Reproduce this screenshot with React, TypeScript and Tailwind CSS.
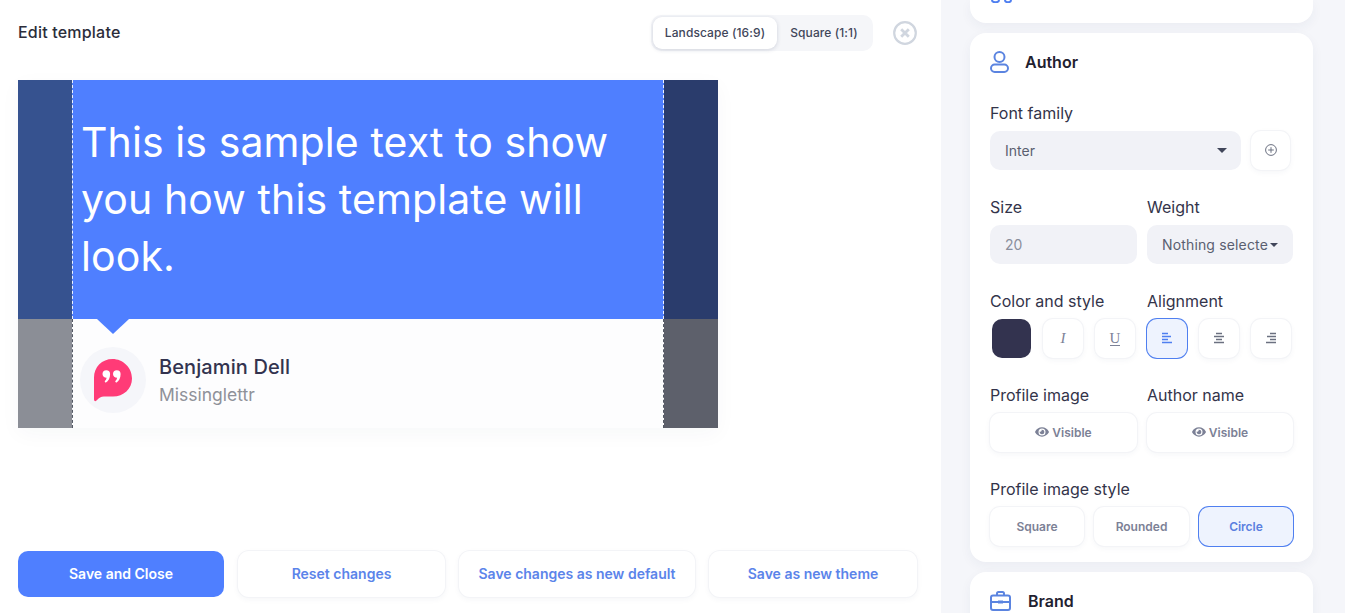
import type { ReactNode } from 'react'
import { FaEye } from 'react-icons/fa'

const shadowBtn = 'bg-white ring-1 ring-[#f3f4f7] shadow-[0_2px_6px_rgba(40,50,90,0.05)]'

function Field({ label, children }: { label: string; children: ReactNode }) {
  return (
    <div>
      <div className="h-[22px] mb-[7px] text-[16px] leading-[22px] text-[#33344a] whitespace-nowrap">{label}</div>
      {children}
    </div>
  )
}

function IconBox({ active, children }: { active?: boolean; children: ReactNode }) {
  return (
    <div
      className={`w-[40px] h-[39px] rounded-[10px] flex items-center justify-center ${
        active ? 'bg-[#eef3fe] ring-1 ring-[#4f7ff0]' : shadowBtn
      }`}
    >
      {children}
    </div>
  )
}

function AlignIcon({ offsets, color }: { offsets: number[][]; color: string }) {
  return (
    <svg width="12" height="12" viewBox="0 0 12 12" stroke={color} strokeWidth="1.500" className="-mt-[1px]">
      {offsets.map(([a, b], i) => (
        <line key={i} x1={a} x2={b} y1={1.5 + i * 3} y2={1.5 + i * 3} />
      ))}
    </svg>
  )
}

function VisibleButton() {
  return (
    <div className={`h-[39px] rounded-[10px] flex items-center justify-center gap-[3px] text-[12px] font-semibold text-[#7c8196] ${shadowBtn}`}>
      <FaEye size={14} className="text-[#7c8196] -mt-[2px]" />
      Visible
    </div>
  )
}

function ActionButton({ width, children }: { width: string; children: ReactNode }) {
  return (
    <button className={`${width} h-[46px] pb-[1px] rounded-[11px] text-[14px] font-semibold text-[#5b84ea] ${shadowBtn}`}>
      {children}
    </button>
  )
}

function Preview() {
  return (
    <div className="w-[700px] h-[348px] grid grid-cols-[54px_592px_54px] grid-rows-[239px_109px] shadow-[0_6px_20px_rgba(40,50,90,0.035)]">
      <div className="bg-[#36528f]" />
      <div className="bg-[#4f7fff] border-x border-dashed border-x-white/90 pl-[8px] pt-[34px] text-[41px] leading-[57px] tracking-[0.1px] text-white">
        This is sample text to show you how this template will look.
      </div>
      <div className="bg-[#2a3c6c]" />
      <div className="bg-[#8b8e96]" />
      <div className="relative bg-[#fdfdfe] border-x border-dashed border-x-[#555a66] pl-[7px] pt-[28px] flex items-start gap-[13px]">
        <div className="absolute left-[24px] top-0 w-0 h-0 border-l-[16px] border-r-[16px] border-t-[15px] border-l-transparent border-r-transparent border-t-[#4f7fff]" />
        <div className="w-[66px] h-[66px] rounded-full bg-[#f5f6fa] flex items-center justify-center">
          <svg width="40" height="44" viewBox="0 0 40 44">
            <path d="M19.500 1C30 1 39 9.500 39 20.500C39 31 30.500 38.500 20 38.500H11C8 38.500 6 40 3.500 42.500C2 44 1 43 1 41V19.500C1 9 9 1 19.500 1Z" fill="#ff3b77" />
            <path d="M9.500 16a3.800 3.800 0 0 1 7.600 0c0 4-1.500 7-4.500 8.700l-1-1.400c1.100-1 1.800-2.100 2-3.500c-2.300-.1-4.100-1.600-4.100-3.800Z" fill="#fff" />
            <path d="M20 16a3.800 3.800 0 0 1 7.600 0c0 4-1.500 7-4.500 8.700l-1-1.400c1.100-1 1.800-2.100 2-3.500c-2.300-.1-4.100-1.600-4.100-3.800Z" fill="#fff" />
          </svg>
        </div>
        <div className="mt-[6px]">
          <div className="text-[20px] leading-[28px] tracking-[0.1px] font-medium text-[#33334f]">Benjamin Dell</div>
          <div className="text-[17.500px] leading-[27px] text-[#8f9199]">Missinglettr</div>
        </div>
      </div>
      <div className="bg-[#5d606b]" />
    </div>
  )
}

export default function App() {
  return (
    <div className="w-[1345px] h-[613px] overflow-hidden flex bg-[#f5f6fa]" style={{ fontFamily: 'Inter, sans-serif' }}>
      <main className="w-[941px] h-full shrink-0 bg-white px-[18px] flex flex-col">
        <header className="h-[80px] flex items-start justify-between">
          <h1 className="mt-[21px] text-[16px] leading-[22px] tracking-[0.2px] font-medium text-[#2b2d3a]">Edit template</h1>
          <div className="flex items-center gap-[20px] mt-[15px] mr-[6px]">
            <div className="w-[222px] h-[36px] rounded-[10px] bg-[#f5f6f9] p-[2px] flex text-[12px] tracking-[0.1px] font-medium text-[#41465a]">
              <div className="w-[124px] rounded-[9px] bg-white shadow-[0_1px_4px_rgba(40,50,90,0.18)] flex items-center justify-center">Landscape (16:9)</div>
              <div className="flex-1 flex items-center justify-center">Square (1:1)</div>
            </div>
            <svg width="24" height="24" viewBox="0 0 24 24" fill="none" stroke="#d0d6df" strokeWidth="2.200">
              <circle cx="12" cy="12" r="10.800" />
              <path d="M8.200 8.200L15.800 15.800M15.800 8.200L8.200 15.800" strokeWidth="2.800" />
            </svg>
          </div>
        </header>
        <Preview />
        <footer className="mt-[123px] flex gap-[14px]">
          <button className="w-[206px] h-[46px] pb-[1px] rounded-[10px] bg-[#4f7fff] text-[14px] font-semibold text-white">Save and Close</button>
          <ActionButton width="w-[207px]">Reset changes</ActionButton>
          <ActionButton width="w-[236px]">Save changes as new default</ActionButton>
          <ActionButton width="w-[208px]">Save as new theme</ActionButton>
        </footer>
      </main>

      <aside className="flex-1 pl-[29px] flex flex-col gap-[10px] bg-[#f5f6fa]">
        <div className="w-[343px] h-[23px] shrink-0 rounded-b-[16px] bg-white shadow-[0_4px_12px_rgba(40,50,90,0.05)] pl-[21px]">
          <svg width="22" height="3" viewBox="0 0 22 3" fill="none" stroke="#4f7ff0" strokeWidth="2" className="block">
            <path d="M1 0c0 3 7 3 7 0M14 0c0 3 6 3 6 0" />
          </svg>
        </div>

        <section className="w-[343px] shrink-0 rounded-[16px] bg-white px-[20px] pt-[18px] pb-[16px] shadow-[0_4px_12px_rgba(40,50,90,0.05)]">
          <div className="h-[22px] flex items-center gap-[16px] mb-[29px]">
            <svg width="19" height="22" viewBox="0 0 19 22" fill="none" stroke="#5b84e0" strokeWidth="2">
              <circle cx="9.500" cy="6" r="5" />
              <rect x="1" y="13.500" width="17" height="7.500" rx="3.700" />
            </svg>
            <h2 className="text-[16px] font-semibold text-[#1f2130]">Author</h2>
          </div>

          <div className="flex flex-col gap-[26px]">
            <Field label="Font family">
              <div className="flex gap-[10px]">
                <div className="w-[251px] h-[39px] rounded-[10px] bg-[#f1f2f7] pl-[15px] pr-[14px] flex items-center justify-between text-[14px] text-[#5a5f70]">
                  Inter
                  <span className="w-0 h-0 border-l-[5px] border-r-[5px] border-t-[5px] border-l-transparent border-r-transparent border-t-[#41465a]" />
                </div>
                <div className={`w-[39px] h-[39px] rounded-[10px] flex items-center justify-center ${shadowBtn}`}>
                  <svg width="12" height="12" viewBox="0 0 12 12" fill="none" stroke="#6b7080" strokeWidth="1" className="-mt-[1px]">
                    <circle cx="6" cy="6" r="5.400" />
                    <path d="M3.200 6H8.800M6 3.200V8.800" />
                  </svg>
                </div>
              </div>
            </Field>

            <div className="grid grid-cols-[147px_146px] gap-x-[10px]">
              <Field label="Size">
                <div className="h-[39px] rounded-[10px] bg-[#f1f2f7] pl-[15px] flex items-center text-[14px] text-[#8a8e9c]">20</div>
              </Field>
              <Field label="Weight">
                <div className="h-[39px] rounded-[10px] bg-[#f1f2f7] pl-[15px] pr-[15px] flex items-center justify-between text-[14px] tracking-[0.15px] text-[#5a5f70] overflow-hidden">
                  <span className="w-[106px] overflow-hidden whitespace-nowrap">Nothing selected</span>
                  <span className="w-0 h-0 border-l-[4px] border-r-[4px] border-t-[4px] border-l-transparent border-r-transparent border-t-[#41465a]" />
                </div>
              </Field>
            </div>

            <div className="grid grid-cols-[147px_146px] gap-x-[10px]">
              <Field label="Color and style">
                <div className="flex items-center gap-[12px]">
                  <div className="w-[39px] h-[39px] ml-[2px] rounded-[10px] bg-[#33334f]" />
                  <IconBox>
                    <span className="text-[15px] italic text-[#7c8196]" style={{ fontFamily: '"Liberation Serif", serif' }}>I</span>
                  </IconBox>
                  <IconBox>
                    <span className="text-[15px] leading-[14px] border-b border-[#7c8196] text-[#7c8196]" style={{ fontFamily: '"Liberation Serif", serif' }}>U</span>
                  </IconBox>
                </div>
              </Field>
              <Field label="Alignment">
                <div className="flex gap-[12px]">
                  <IconBox active>
                    <AlignIcon color="#4f7ff0" offsets={[[1, 7], [1, 10], [1, 7], [1, 11]]} />
                  </IconBox>
                  <IconBox>
                    <AlignIcon color="#6b7080" offsets={[[3, 9], [1, 11], [3, 9], [1, 11]]} />
                  </IconBox>
                  <IconBox>
                    <AlignIcon color="#6b7080" offsets={[[5, 11], [2, 11], [5, 11], [1, 11]]} />
                  </IconBox>
                </div>
              </Field>
            </div>

            <div className="grid grid-cols-[147px_146px] gap-x-[10px]">
              <Field label="Profile image">
                <VisibleButton />
              </Field>
              <Field label="Author name">
                <VisibleButton />
              </Field>
            </div>

            <Field label="Profile image style">
              <div className="grid grid-cols-[94px_95px_94px] gap-x-[10px] text-[12px] font-semibold">
                <div className={`h-[39px] rounded-[10px] flex items-center justify-center text-[#7c8196] ${shadowBtn}`}>Square</div>
                <div className={`h-[39px] rounded-[10px] flex items-center justify-center text-[#7c8196] ${shadowBtn}`}>Rounded</div>
                <div className="h-[39px] rounded-[10px] flex items-center justify-center text-[#5b7fe0] bg-[#eef3fe] ring-1 ring-[#4f7ff0]">Circle</div>
              </div>
            </Field>
          </div>
        </section>

        <section className="w-[343px] h-[80px] shrink-0 rounded-[16px] bg-white px-[20px] pt-[17px] shadow-[0_4px_12px_rgba(40,50,90,0.05)]">
          <div className="flex items-center gap-[17px]">
            <svg width="21" height="20" viewBox="0 0 21 20" fill="none" stroke="#5b84e0" strokeWidth="2">
              <rect x="1" y="4.500" width="19" height="14.500" rx="2" />
              <path d="M7 4.500V2.500C7 1.700 7.700 1 8.500 1H12.500C13.300 1 14 1.700 14 2.500V4.500M1 11H8M13 11H20" />
              <path d="M8 11H13" strokeWidth="3" />
            </svg>
            <h2 className="text-[16px] font-semibold text-[#1f2130]">Brand</h2>
          </div>
        </section>
      </aside>
    </div>
  )
}
